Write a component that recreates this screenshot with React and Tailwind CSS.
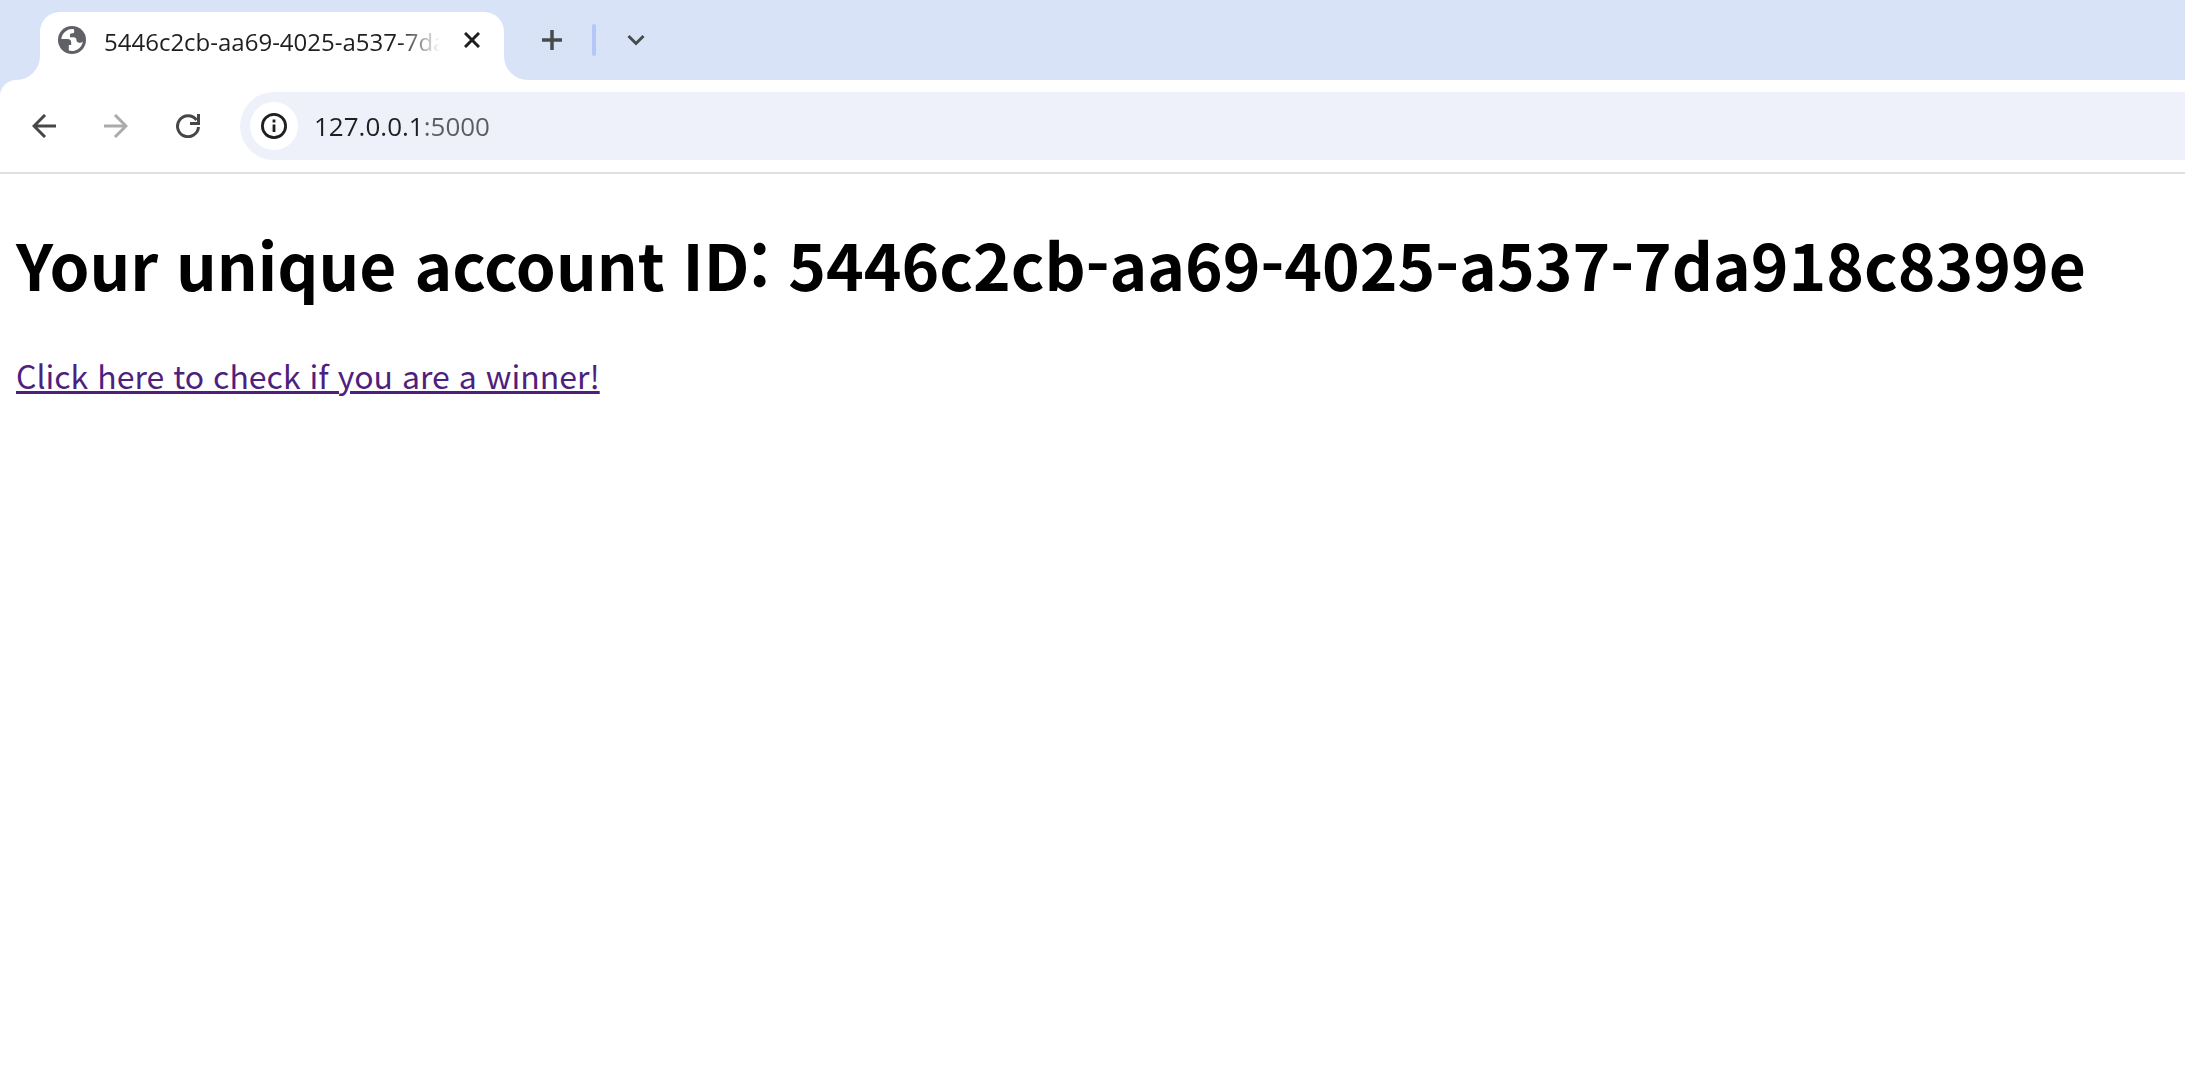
import React, { useState } from 'react';

const ACCOUNT_ID = '5446c2cb-aa69-4025-a537-7da918c8399e';

function GlobeIcon() {
  return (
    <svg viewBox="0 0 28 28" className="h-7 w-7 shrink-0" aria-hidden="true">
      <circle cx="14" cy="14" r="14" fill="#5f6164" />
      <path
        fill="#fff"
        d="M16 3.300A10.900 10.900 0 0 0 3.300 13H9.500c2.500 0 3.700 1.400 3.700 3.500V19H10.800v5.500A10.900 10.900 0 0 0 24.800 15.500c-1.200 1.300-2.600 1.500-3.800 1.200-2-.4-2.500-1.500-2.500-2.700 0-1.700-1.200-2.700-3-2.700H12V9c0-1 .8-1.800 1.800-1.800h.9c1 0 1.500-.7 1.500-1.500z"
      />
    </svg>
  );
}

function TabStrip() {
  return (
    <div className="flex h-20 items-end bg-[#d9e3f8] pl-4 text-[#454c4a]">
      <svg viewBox="0 0 24 24" className="h-6 w-6 shrink-0" aria-hidden="true">
        <path d="M24 0v24H0A24 24 0 0 0 24 0z" fill="#fff" />
      </svg>
      <div className="flex h-[68px] w-[464px] shrink-0 items-center rounded-t-[20px] bg-white pr-5 pb-3 pl-[18px]">
        <GlobeIcon />
        <div className="ml-[18px] flex-1 overflow-hidden pt-1 text-2xl whitespace-nowrap text-[#1f1f1f] mask-r-from-88%">
          {ACCOUNT_ID}
        </div>
        <button type="button" aria-label="Close tab" className="ml-5 p-1 text-[#1f1f1f]">
          <svg viewBox="0 0 16 16" className="h-4 w-4" fill="none" stroke="currentColor" strokeWidth="3">
            <path d="M1 1l14 14M15 1L1 15" />
          </svg>
        </button>
      </div>
      <svg viewBox="0 0 24 24" className="h-6 w-6 shrink-0" aria-hidden="true">
        <path d="M0 0v24h24A24 24 0 0 1 0 0z" fill="#fff" />
      </svg>
      <div className="flex h-20 items-center">
        <button type="button" aria-label="New tab" className="ml-3.5">
          <svg viewBox="0 0 20 20" className="h-5 w-5" fill="none" stroke="currentColor" strokeWidth="3.500">
            <path d="M10 0v20M0 10h20" />
          </svg>
        </button>
        <div className="mx-[30px] h-8 w-1 rounded-full bg-[#b6c6f7]" />
        <button type="button" aria-label="Search tabs">
          <svg viewBox="0 0 20 12" className="h-3 w-5" fill="none" stroke="currentColor" strokeWidth="3">
            <path d="M2.500 2l7.500 7.500L17.500 2" />
          </svg>
        </button>
      </div>
    </div>
  );
}

function Toolbar() {
  const [address, setAddress] = useState('127.0.0.1:5000');

  return (
    <div className="bg-[#d9e3f8]">
      <div className="flex items-center rounded-tl-[16px] border-b-2 border-[#dfe0e2] bg-white py-3 pl-8 text-[#474747]">
        <button type="button" aria-label="Back">
          <svg viewBox="0 0 24 24" className="h-6 w-6" fill="none" stroke="currentColor" strokeWidth="3">
            <path d="M24 12H2M13 1L2 12l11 11" />
          </svg>
        </button>
        <button type="button" aria-label="Forward" disabled className="ml-12 text-[#ababab]">
          <svg viewBox="0 0 24 24" className="h-6 w-6" fill="none" stroke="currentColor" strokeWidth="3">
            <path d="M0 12h22M11 1l11 11-11 11" />
          </svg>
        </button>
        <button type="button" aria-label="Reload" className="ml-12">
          <svg viewBox="0 0 24 24" className="h-6 w-6" fill="none" stroke="currentColor" strokeWidth="3">
            <path d="M22.500 13A10.500 10.500 0 1 1 20.500 6M22.500 0v9.500H14" />
          </svg>
        </button>
        <div className="ml-10 flex h-[68px] flex-1 items-center rounded-l-full bg-[#eef1fa] pl-2.5">
          <button
            type="button"
            aria-label="View site information"
            className="flex h-12 w-12 shrink-0 items-center justify-center rounded-full bg-white text-[#1f1f1f]"
          >
            <svg viewBox="0 0 26 26" className="h-[26px] w-[26px]" fill="none" stroke="currentColor" strokeWidth="2.800">
              <circle cx="13" cy="13" r="11.600" />
              <path d="M13 11.500V19M13 6.500v3" />
            </svg>
          </button>
          {/* the port is greyed with a hard gradient stop */}
          <input
            type="text"
            aria-label="Address"
            value={address}
            onChange={(e) => setAddress(e.target.value)}
            className="ml-4 min-w-0 flex-1 bg-linear-to-r from-[#1f1f1f] from-[110px] to-[#5a5c60] to-[110px] bg-clip-text text-[26px] leading-9 text-transparent caret-black outline-none"
          />
        </div>
      </div>
    </div>
  );
}

export default function App() {
  return (
    <div className="min-h-screen bg-white font-['Open_Sans','Noto_Sans',sans-serif]">
      <TabStrip />
      <Toolbar />
      <main lang="ko" className="mt-[43px] px-4 font-['Noto_Sans_CJK_KR',sans-serif]">
        <h1 className="text-[64px] leading-[93px] font-bold text-black">Your unique account ID: {ACCOUNT_ID}</h1>
        <p className="mt-[42px] text-[32px] leading-[47px]">
          <a href="#winner" className="text-[#4f1f80] underline">
            Click here to check if you are a winner!
          </a>
        </p>
      </main>
    </div>
  );
}
